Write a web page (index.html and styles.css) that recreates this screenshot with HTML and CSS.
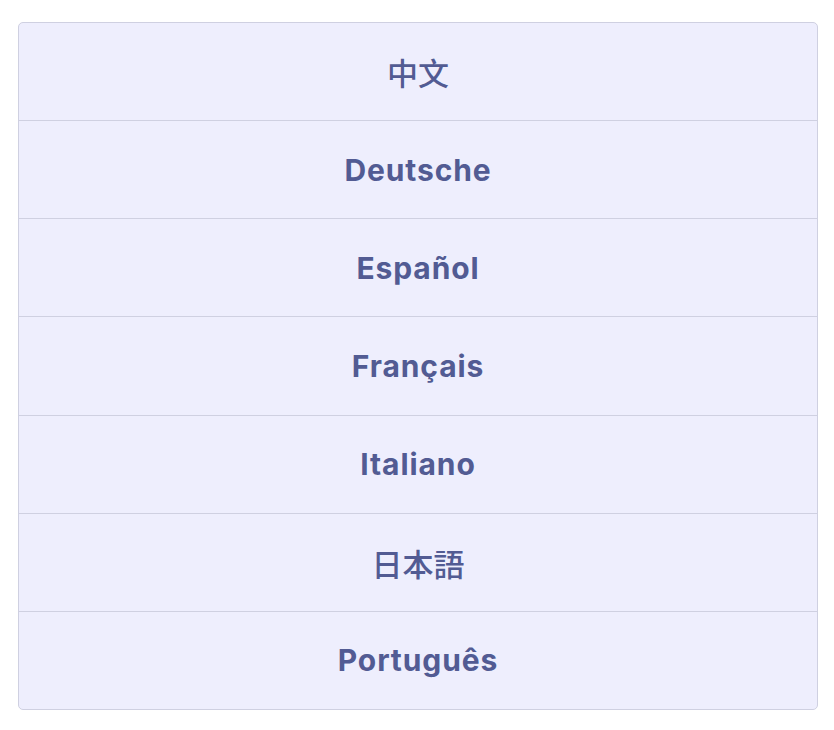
FILE: index.html
```html
<!DOCTYPE html>
<html lang="en">
<head>
<meta charset="utf-8">
<link rel="stylesheet" href="styles.css">
</head>
<body>
<ul class="lang-list">
  <li class="lang-item lang-item--cjk" lang="zh">中文</li>
  <li class="lang-item">Deutsche</li>
  <li class="lang-item">Español</li>
  <li class="lang-item">Français</li>
  <li class="lang-item">Italiano</li>
  <li class="lang-item lang-item--cjk" lang="ja">日本語</li>
  <li class="lang-item">Português</li>
</ul>
</body>
</html>
```
FILE: styles.css
```css
html, body {
  margin: 0;
  padding: 0;
  background: #ffffff;
}
body {
  padding: 22px 16px 0 18px;
  font-family: Inter, "Noto Sans CJK JP", sans-serif;
}
.lang-list {
  list-style: none;
  margin: 0;
  padding: 0;
  width: 800px;
  height: 688px;
  box-sizing: border-box;
  display: flex;
  flex-direction: column;
  border: 1px solid #cfd0e1;
  border-radius: 5px;
  background: #eeeefd;
  overflow: hidden;
}
.lang-item {
  flex: 1;
  display: flex;
  align-items: center;
  justify-content: center;
  font-size: 30px;
  font-weight: 700;
  letter-spacing: 0.9px;
  color: #525b93;
}
.lang-item--cjk {
  font-family: "Noto Sans CJK JP", sans-serif;
  font-weight: 500;
  font-size: 31px;
  letter-spacing: 0;
}
.lang-item + .lang-item {
  border-top: 1px solid #cfd0e1;
}
```
